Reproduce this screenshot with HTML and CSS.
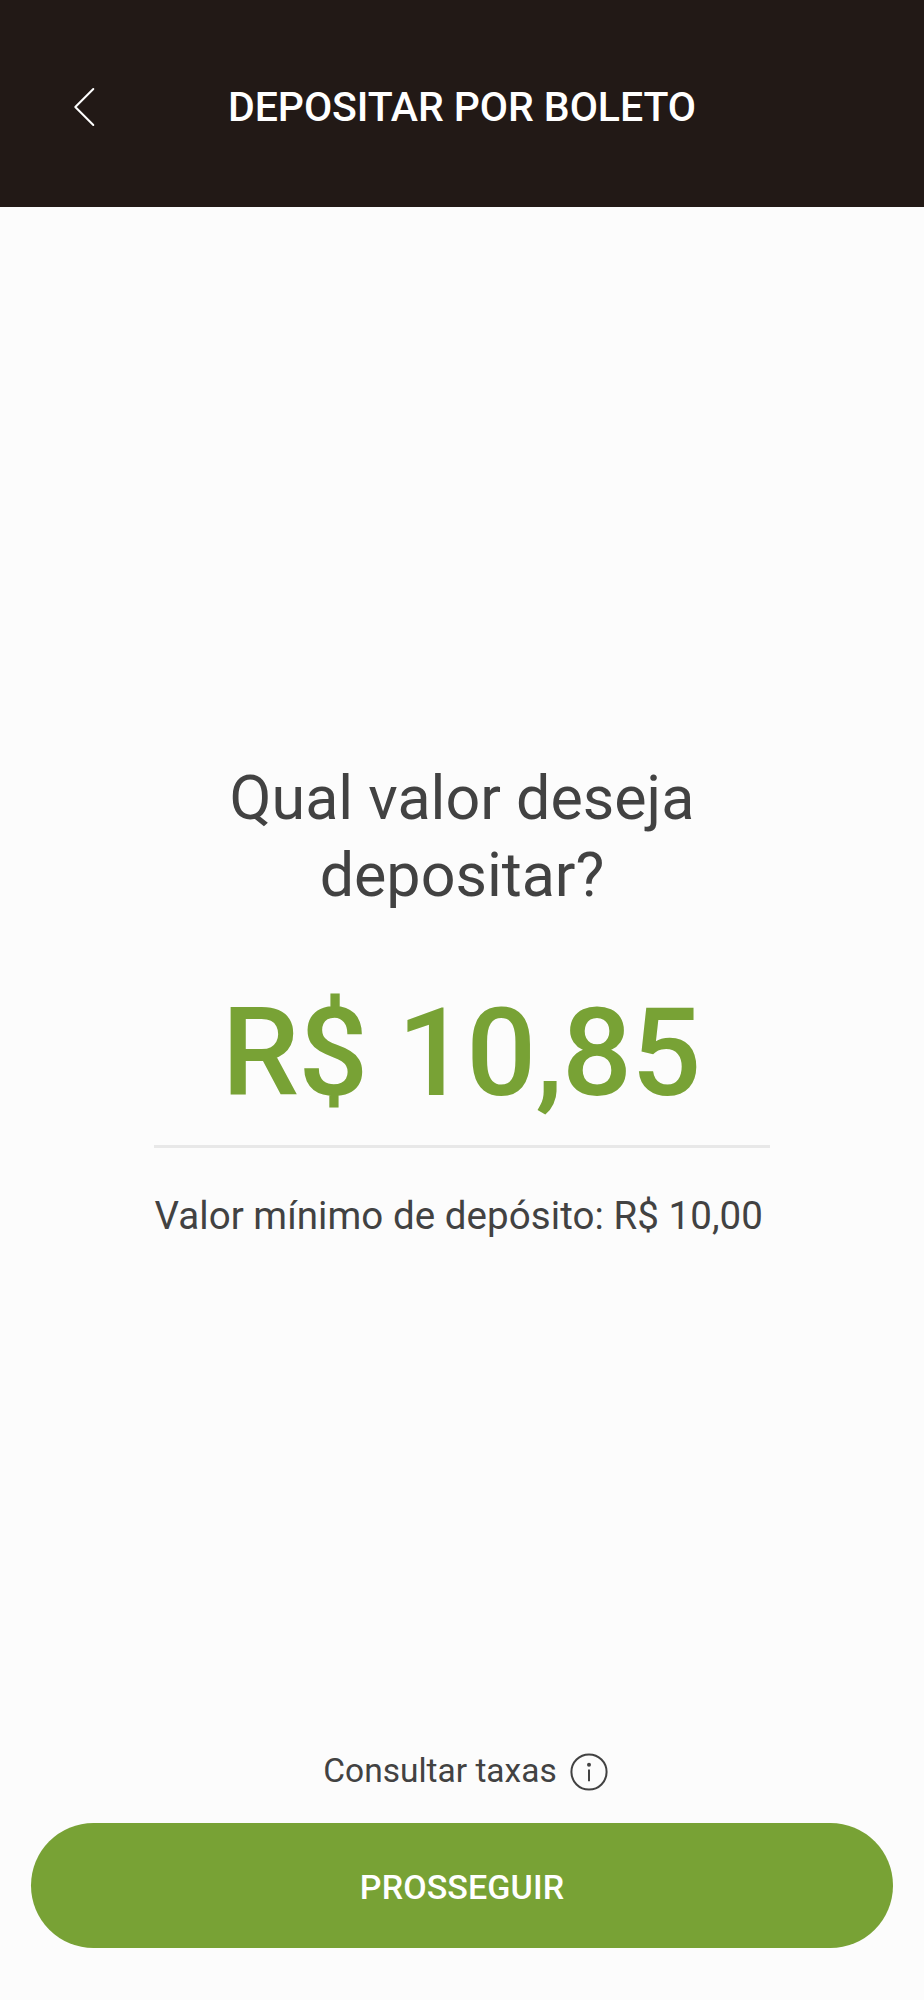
FILE: index.html
```html
<!DOCTYPE html>
<html lang="pt-BR">
<head>
    <meta charset="UTF-8">
    <meta name="viewport" content="width=device-width, initial-scale=1.0">
    <title>Depositar por boleto</title>
    <link rel="stylesheet" href="styles.css">
</head>

<body>
    <header class="header">
        <button class="back" type="button" aria-label="Voltar">
            <svg width="22" height="40" viewBox="0 0 22 40" fill="none" stroke="#fff" stroke-width="2" stroke-linecap="round" stroke-linejoin="round">
                <path d="M20.3 2L2.3 20L20.3 38" />
            </svg>
        </button>
        <h1 class="title">DEPOSITAR POR BOLETO</h1>
    </header>

    <main class="content">
        <h2 class="question">Qual valor deseja depositar?</h2>
        <div class="amount">R$ 10,85</div>
        <p class="minimum">Valor mínimo de depósito: R$ 10,00</p>
    </main>

    <footer class="footer">
        <a class="fees">
            <span>Consultar taxas</span>
            <svg class="info" width="38" height="38" viewBox="0 0 38 38">
                <circle cx="19" cy="19" r="17.6" fill="none" stroke="#424242" stroke-width="2" />
                <circle cx="19" cy="11.7" r="2" fill="#424242" />
                <path d="M19 16.6V28.2" stroke="#424242" stroke-width="2" />
            </svg>
        </a>
        <button class="submit" type="button">PROSSEGUIR</button>
    </footer>
</body>

</html>
```

FILE: styles.css
```css
body {
    font-family: Roboto, sans-serif;
    background-color: #fcfcfc;
    color: #424242;
    display: flex;
    flex-direction: column;
    height: 2000px;
    margin: 0;
}

h1,
h2,
p {
    margin: 0;
    font-weight: 400;
}

button {
    border: none;
    padding: 0;
    font-family: inherit;
}

.header {
    box-sizing: border-box;
    height: 207px;
    padding: 83px 73px 0;
    background-color: #221916;
    display: grid;
    grid-template-columns: 60px 1fr 60px;
    align-items: start;
}

.back {
    background: none;
    height: 48px;
    display: flex;
    align-items: center;
}

.title {
    color: #fff;
    font-size: 41px;
    font-weight: 500;
    line-height: 48px;
    letter-spacing: -0.08px;
    text-align: center;
    white-space: nowrap;
}

.content {
    width: 616px;
    margin: 0 auto;
    padding-top: 553px;
    flex: 1;
}

.question {
    font-size: 61px;
    line-height: 77px;
    text-align: center;
}

.amount {
    margin-top: 67px;
    padding-bottom: 20px;
    border-bottom: 3px solid #e8e8e8;
    color: #78a235;
    font-size: 123.2px;
    font-weight: 500;
    line-height: 144px;
    letter-spacing: -0.9px;
    text-align: center;
    text-indent: -2px;
    white-space: nowrap;
}

.minimum {
    margin-top: 45px;
    padding-left: 0.5px;
    font-size: 38.5px;
    line-height: 45px;
    letter-spacing: 0.06px;
    white-space: nowrap;
}

.footer {
    padding: 0 31px 52px;
}

.fees {
    display: flex;
    justify-content: center;
    align-items: center;
    gap: 13px;
    padding-left: 7px;
    margin-bottom: 32px;
    font-size: 33.5px;
    line-height: 40px;
}

.info {
    margin-top: 1px;
}

.submit {
    display: block;
    box-sizing: border-box;
    width: 100%;
    height: 125px;
    padding-top: 2px;
    border-radius: 63px;
    background-color: #78a235;
    color: #fff;
    font-size: 34px;
    font-weight: 500;
    letter-spacing: 0.1px;
}
```
